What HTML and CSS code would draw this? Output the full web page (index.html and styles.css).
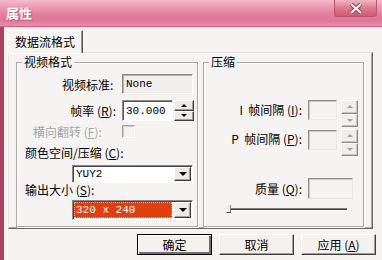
FILE: index.html
```html
<!DOCTYPE html>
<html>
<head>
<meta charset="utf-8">
<link rel="stylesheet" href="styles.css">
</head>
<body>
<div class="window">
  <div class="titlebar">
    <span class="title">属性</span>
    <div class="close">
      <svg width="14" height="11" viewBox="0 0 14 11">
        <path d="M2 1 L12 10 M12 1 L2 10" stroke="#9a3a50" stroke-width="4" fill="none"/>
        <path d="M2 1 L12 10 M12 1 L2 10" stroke="#ffffff" stroke-width="2" fill="none"/>
      </svg>
    </div>
  </div>
  <div class="frame">
    <div class="tabs"><div class="tab">数据流格式</div></div>
    <div class="panel">
      <div class="group g-video">
        <span class="legend">视频格式</span>
        <div class="row r1">
          <span class="lbl">视频标准:&nbsp;</span>
          <div class="field ro mono">None</div>
        </div>
        <div class="row r2">
          <span class="lbl">帧率 (<u>R</u>):</span>
          <div class="field edit mono">30.000</div>
          <div class="spin">
            <div class="sbtn"><span class="up"></span></div>
            <div class="sbtn"><span class="down"></span></div>
          </div>
        </div>
        <div class="row r3">
          <span class="lbl dis left">横向翻转 (<u>F</u>):</span>
          <div class="check"></div>
        </div>
        <div class="line l1">颜色空间/压缩 (<u>C</u>):</div>
        <div class="combo c1">
          <div class="val mono">YUY2</div>
          <div class="dbtn"><span class="down"></span></div>
        </div>
        <div class="line l2">输出大小 (<u>S</u>):</div>
        <div class="combo c2">
          <div class="val sel mono">320 x 240</div>
          <div class="dbtn"><span class="down"></span></div>
        </div>
      </div>
      <div class="group g-comp">
        <span class="legend">压缩</span>
        <div class="rrow ri">
          <span class="rlbl">I&nbsp; 帧间隔 (<u>I</u>):</span>
          <div class="dfield"></div>
          <div class="dspin">
            <div class="dsbtn"><span class="up g"></span></div>
            <div class="dsbtn"><span class="down g"></span></div>
          </div>
        </div>
        <div class="rrow rp">
          <span class="rlbl">P&nbsp; 帧间隔 (<u>P</u>):</span>
          <div class="dfield"></div>
          <div class="dspin">
            <div class="dsbtn"><span class="up g"></span></div>
            <div class="dsbtn"><span class="down g"></span></div>
          </div>
        </div>
        <div class="rrow rq">
          <span class="rlbl q">质量 (<u>Q</u>):</span>
          <div class="dfield wide"></div>
        </div>
        <div class="slider">
          <div class="thumb"></div>
          <div class="track"></div>
        </div>
      </div>
    </div>
    <div class="buttons">
      <div class="btn def">确定</div>
      <div class="btn">取消</div>
      <div class="btn">应用 (<u>A</u>)</div>
    </div>
  </div>
</div>
</body>
</html>
```
FILE: styles.css
```css
* { box-sizing: border-box; }
body {
  margin: 0;
  width: 382px;
  height: 260px;
  overflow: hidden;
  font-family: "Noto Sans CJK SC", "Liberation Sans", sans-serif;
  font-size: 12px;
  color: #000;
  background: #f5f4f2;
}
u { text-decoration: underline; text-underline-offset: 1px; }
.mono { font-family: "Liberation Mono", "Noto Sans CJK SC", monospace; font-size: 11px; }

.window { width: 382px; height: 260px; display: flex; flex-direction: column; }

.titlebar {
  height: 27px;
  flex: none;
  display: flex;
  justify-content: space-between;
  align-items: flex-start;
  background: linear-gradient(#f6bccd 0%, #ee9cb5 25%, #e27e9e 55%, #df7698 80%, #e98fab 100%);
  border-bottom: 1px solid #c76684;
}
.title {
  color: #fff;
  font-weight: bold;
  font-size: 13px;
  line-height: 25px;
  padding-left: 6px;
  text-shadow: 1px 1px 0 #c0607e;
}
.close {
  width: 43px;
  height: 17px;
  margin-right: 5px;
  border: 1px solid #b9566f;
  border-top: none;
  border-radius: 0 0 3px 3px;
  background: linear-gradient(#f3b3c2, #e07890 50%, #d05a74);
  display: flex;
  align-items: center;
  justify-content: center;
}

.frame {
  flex: 1;
  display: flex;
  flex-direction: column;
  border-left: 4px solid #a84462;
  padding: 3px 0 0 4px;
  background: #f5f4f2;
}

.tabs { display: flex; height: 22px; flex: none; }
.tab {
  width: 75px;
  height: 23px;
  position: relative;
  z-index: 1;
  background: #f5f4f2;
  border-top: 1px solid #fff;
  border-left: 1px solid #fff;
  border-right: 1px solid #555;
  box-shadow: inset -1px 0 0 #999;
  padding-left: 6px;
  line-height: 21px;
}

.panel {
  width: 365px;
  height: 177px;
  flex: none;
  border-top: 1px solid #dcdcdc;
  border-left: 1px solid #e4e4e4;
  border-right: 1px solid #666;
  border-bottom: 1px solid #666;
  box-shadow: inset -1px -1px 0 #a8a8a8, inset 1px 1px 0 #fff;
  display: flex;
  gap: 5px;
  padding: 9px 0 0 7px;
}

.group {
  position: relative;
  height: 165px;
  border: 1px solid #a9a9a9;
  box-shadow: inset 1px 1px 0 #fff, 1px 1px 0 #fff;
}
.g-video { width: 182px; padding-top: 11px; }
.g-comp { width: 161px; padding-top: 37px; }
.legend {
  position: absolute;
  top: -8px;
  left: 5px;
  padding: 0 2px;
  line-height: 14px;
  background: #f5f4f2;
}

.row { display: flex; align-items: center; }
.lbl { width: 100px; text-align: right; padding-right: 1px; white-space: nowrap; }
.lbl.left { text-align: left; padding-left: 16px; }
.dis { color: #a3a3a3; text-shadow: 1px 1px 0 #fff; }
.r1 { height: 20px; }
.r2 { height: 21px; margin-top: 6px; }
.r3 { height: 13px; margin-top: 4px; }

.field {
  margin-left: 5px;
  border: 1px solid;
  border-color: #8a8a8a #fff #fff #8a8a8a;
  box-shadow: inset 1px 1px 0 #555;
  padding-left: 3px;
  display: flex;
  align-items: center;
}
.field.ro { width: 71px; height: 20px; background: #f0efec; box-shadow: inset 1px 1px 0 #b0b0b0; }
.field.edit { width: 51px; height: 21px; background: #fff; }

.spin { margin-left: 1px; width: 20px; height: 21px; display: flex; flex-direction: column; }
.sbtn {
  flex: 1;
  border: 1px solid;
  border-color: #fff #404040 #404040 #fff;
  box-shadow: inset -1px -1px 0 #a0a0a0;
  background: #ecebe8;
  display: flex;
  align-items: center;
  justify-content: center;
}
.up { width: 0; height: 0; border-left: 3px solid transparent; border-right: 3px solid transparent; border-bottom: 3px solid #000; }
.down { width: 0; height: 0; border-left: 3px solid transparent; border-right: 3px solid transparent; border-top: 3px solid #000; }
.up.g { border-bottom-color: #a0a0a0; }
.down.g { border-top-color: #a0a0a0; }

.check {
  margin-left: 5px;
  width: 13px;
  height: 13px;
  border: 1px solid;
  border-color: #a0a0a0 #fff #fff #a0a0a0;
  box-shadow: inset 1px 1px 0 #d0d0d0;
  background: #f5f4f2;
}

.line { padding-left: 8px; line-height: 14px; white-space: nowrap; }
.l1 { margin-top: 8px; }
.l2 { margin-top: 0; }

.combo {
  margin-left: 55px;
  width: 121px;
  display: flex;
  align-items: stretch;
  border: 1px solid;
  border-color: #8a8a8a #fff #fff #8a8a8a;
  box-shadow: inset 1px 1px 0 #444;
  background: #fff;
  padding: 1px;
}
.c1 { height: 18px; margin-top: 5px; }
.c2 { height: 20px; margin-top: 3px; }
.val { flex: 1; padding-left: 2px; display: flex; align-items: center; }
.val.sel {
  background: #e23f10;
  color: #fff;
  outline: 1px dotted #f4d040;
  outline-offset: -1px;
  margin-right: 2px;
}
.dbtn {
  width: 17px;
  border: 1px solid;
  border-color: #fff #404040 #404040 #fff;
  box-shadow: inset -1px -1px 0 #a0a0a0;
  background: #ecebe8;
  display: flex;
  align-items: center;
  justify-content: center;
}
.dbtn .down { border-left-width: 4px; border-right-width: 4px; border-top-width: 4px; }

.rrow { display: flex; align-items: flex-start; }
.rlbl { width: 98px; text-align: right; line-height: 20px; white-space: nowrap; }
.dfield {
  margin-left: 6px;
  width: 29px;
  height: 20px;
  border: 1px solid;
  border-color: #8e8e8e #e8e8e8 #e8e8e8 #8e8e8e;
  box-shadow: inset 1px 1px 0 #c8c8c8;
  background: #f5f4f2;
}
.dfield.wide { width: 45px; height: 21px; }
.dspin { margin-left: 4px; width: 17px; height: 27px; display: flex; flex-direction: column; }
.dsbtn {
  flex: 1;
  border: 1px solid;
  border-color: #fff #8a8a8a #8a8a8a #fff;
  box-shadow: inset -1px -1px 0 #c4c4c4;
  background: #efeeeb;
  display: flex;
  align-items: center;
  justify-content: center;
}
.ri { height: 27px; }
.rp { height: 27px; margin-top: 2px; }
.rp .dfield { margin-top: 1px; }
.rq { margin-top: 22px; height: 21px; }
.rlbl.q { line-height: 21px; }

.slider { margin: 6px 0 0 22px; width: 121px; height: 8px; display: flex; align-items: flex-end; }
.thumb {
  width: 5px;
  height: 8px;
  border-left: 1px solid #fff;
  border-bottom: 1px solid #404040;
  border-right: 1px solid #808080;
  background: #ecebe8;
  flex: none;
}
.track {
  flex: 1;
  height: 3px;
  margin-bottom: 2px;
  border-top: 1px solid #808080;
  border-bottom: 1px solid #fff;
  box-shadow: inset 0 1px 0 #404040;
}

.buttons {
  display: flex;
  justify-content: flex-end;
  gap: 7px;
  padding-right: 6px;
  margin-top: 5px;
  margin-left: -8px;
}
.btn {
  width: 75px;
  height: 21px;
  border: 1px solid;
  border-color: #fff #404040 #404040 #fff;
  box-shadow: inset -1px -1px 0 #a0a0a0;
  background: #f3f2ef;
  display: flex;
  align-items: center;
  justify-content: center;
  line-height: 14px;
  white-space: pre;
}
.btn.def {
  border: 1px solid #000;
  box-shadow: inset 1px 1px 0 #fff, inset -2px -2px 0 #707070;
}
```
